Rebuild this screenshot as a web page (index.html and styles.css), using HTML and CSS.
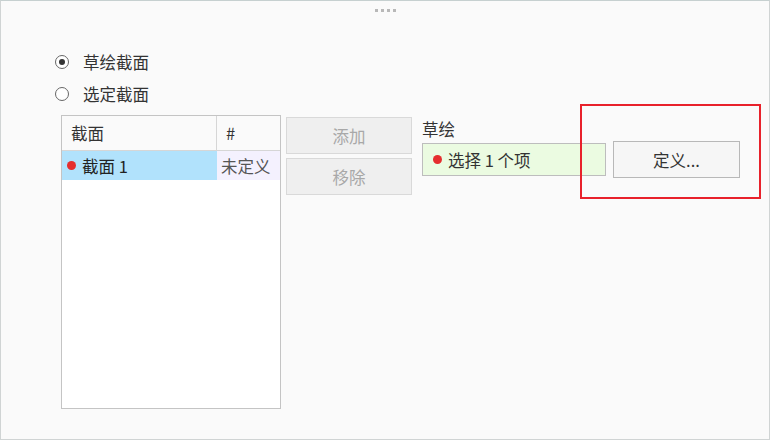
FILE: index.html
```html
<!DOCTYPE html>
<html>
	<head>
		<meta charset="UTF-8">
		<meta name="viewport" content="width=device-width, initial-scale=1.0" />
		<title>截面</title>
		<link rel="stylesheet" href="styles.css">
	</head>
	<body>
		<div class="panel">
			<div class="grip"><i></i><i></i><i></i><i></i></div>

			<div class="choices">
				<label class="choice"><span class="radio on"></span>草绘截面</label>
				<label class="choice"><span class="radio"></span>选定截面</label>
			</div>

			<div class="main">
				<div class="table">
					<div class="row head">
						<div class="cell c1">截面</div>
						<div class="cell c2">#</div>
					</div>
					<div class="row sel">
						<div class="cell c1"><span class="dot"></span>截面 1</div>
						<div class="cell c2">未定义</div>
					</div>
				</div>

				<div class="btns">
					<div class="btn off">添加</div>
					<div class="btn off">移除</div>
				</div>

				<div class="sketch">
					<div class="lbl">草绘</div>
					<div class="line">
						<div class="pick"><span class="dot"></span>选择 1 个项</div>
						<div class="btn def">定义...</div>
					</div>
				</div>
			</div>

			<div class="mark"></div>
		</div>
	</body>
</html>
```

FILE: styles.css
```css
body{padding:0;margin:0;background:#fafafa;}
.panel{position:relative;width:770px;height:440px;box-sizing:border-box;border:1px solid #d0d4d4;border-top-color:#c6d0d0;background:#fafafa;
	font-family:"Noto Sans CJK SC","Microsoft YaHei",sans-serif;font-size:16.5px;color:#333;}

.grip{display:flex;justify-content:center;gap:3px;padding-top:8px;height:3px;}
.grip i{display:block;width:3px;height:3px;background:#b8b8b8;}

.choices{padding:34px 0 0 54px;}
.choice{display:flex;align-items:center;height:32px;}
.radio{width:12px;height:12px;border:1.5px solid #666;border-radius:50%;margin-right:14px;display:flex;align-items:center;justify-content:center;background:#fff;}
.radio.on::after{content:"";width:6px;height:6px;border-radius:50%;background:#333;}

.main{display:flex;align-items:flex-start;padding:5px 0 0 60px;}

.table{width:218px;height:292px;border:1px solid #c4c4c4;background:#fff;}
.row{display:flex;}
.cell{box-sizing:border-box;display:flex;align-items:center;white-space:nowrap;overflow:hidden;}
.c1{width:155px;}
.c2{width:63px;}
.head{height:34px;background:#fafafa;border-bottom:1px solid #d6d6d6;}
.head .c1{padding-left:9px;border-right:1px solid #d6d6d6;}
.head .c2{padding-left:9px;}
.sel{height:29px;}
.sel .c1{background:#b1e2fc;padding-left:5px;color:#222;}
.sel .c2{background:#f4f1fe;padding-left:4px;color:#555;}

.dot{display:inline-block;width:9px;height:9px;border-radius:50%;background:#e52e2e;margin-right:6px;}

.btns{display:flex;flex-direction:column;gap:4px;margin:2px 0 0 5px;}
.btn{box-sizing:border-box;display:flex;align-items:center;justify-content:center;width:126px;height:37px;border:1px solid #c8c8c8;background:#f6f6f6;}
.btn.off{background:#efefef;border-color:#d9d9d9;color:#a8a8a8;}

.sketch{margin-left:10px;}
.lbl{height:24px;line-height:24px;margin-top:2px;}
.line{display:flex;align-items:center;gap:7px;}
.pick{box-sizing:border-box;width:184px;height:33px;border:1px solid #bdbdbd;background:#ebfbe1;display:flex;align-items:center;padding-left:10px;}
.btn.def{width:127px;border-color:#b8b8b8;}

.mark{position:absolute;left:579px;top:103px;width:177px;height:91px;border:2px solid #e8212b;}
```
